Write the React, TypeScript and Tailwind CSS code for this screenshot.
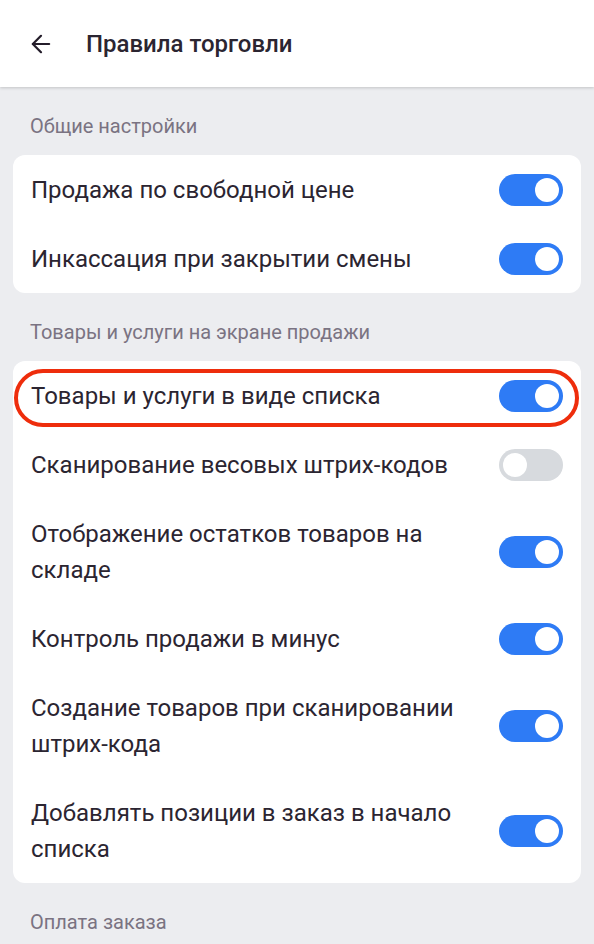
import { ArrowLeft } from 'lucide-react';

// ─── Data ────────────────────────────────────────────────────────────────────

type Setting = { label: string; on: boolean; highlighted?: boolean };

const GENERAL: Setting[] = [
  { label: 'Продажа по свободной цене', on: true },
  { label: 'Инкассация при закрытии смены', on: true },
];

const SALES_SCREEN: Setting[] = [
  { label: 'Товары и услуги в виде списка', on: true, highlighted: true },
  { label: 'Сканирование весовых штрих-кодов', on: false },
  { label: 'Отображение остатков товаров на складе', on: true },
  { label: 'Контроль продажи в минус', on: true },
  { label: 'Создание товаров при сканировании штрих-кода', on: true },
  { label: 'Добавлять позиции в заказ в начало списка', on: true },
];

// ─── Pieces ──────────────────────────────────────────────────────────────────

function Toggle({ on }: { on: boolean }) {
  return (
    <div
      className={`flex h-[32px] w-[64px] shrink-0 items-center rounded-full px-[4px] ${
        on ? 'justify-end bg-[#2e7bf5]' : 'justify-start bg-[#d7dade]'
      }`}
    >
      <div className="h-[24px] w-[24px] rounded-full bg-white" />
    </div>
  );
}

function SectionLabel({ children }: { children: string }) {
  return (
    <div className="px-[30px] pt-[27px] pb-[17px] text-[20px] leading-[24px] text-[#7a7382]">
      {children}
    </div>
  );
}

function Row({ item }: { item: Setting }) {
  return (
    <div className="relative flex items-center gap-6 py-[16.5px] pl-[18px] pr-[18px]">
      <span className="flex-1 text-[24px] leading-[36px] text-[#2b2531]">{item.label}</span>
      <Toggle on={item.on} />
      {item.highlighted && (
        <div className="pointer-events-none absolute top-[8px] bottom-[3px] left-[1px] right-[2px] rounded-full border-[4px] border-[#ee2d0c]" />
      )}
    </div>
  );
}

function Card({ items }: { items: Setting[] }) {
  return (
    <div className="mx-[13px] rounded-[12px] bg-white">
      {items.map((it) => (
        <Row key={it.label} item={it} />
      ))}
    </div>
  );
}

// ─── Screen ──────────────────────────────────────────────────────────────────

export default function App() {
  return (
    <div
      className="h-[944px] w-[594px] overflow-hidden bg-[#ecedf0]"
      style={{ fontFamily: 'Roboto, "Noto Sans", sans-serif' }}
    >
      <header className="flex h-[87px] items-center bg-white shadow-[0_1px_3px_rgba(0,0,0,0.18)]">
        <ArrowLeft className="ml-[27px] h-[28px] w-[28px] text-[#241d2a]" strokeWidth={1.9} />
        <h1 className="ml-[31px] text-[24px] font-medium text-[#2b2531]">Правила торговли</h1>
      </header>

      <SectionLabel>Общие настройки</SectionLabel>
      <Card items={GENERAL} />

      <SectionLabel>Товары и услуги на экране продажи</SectionLabel>
      <Card items={SALES_SCREEN} />

      <SectionLabel>Оплата заказа</SectionLabel>
    </div>
  );
}
